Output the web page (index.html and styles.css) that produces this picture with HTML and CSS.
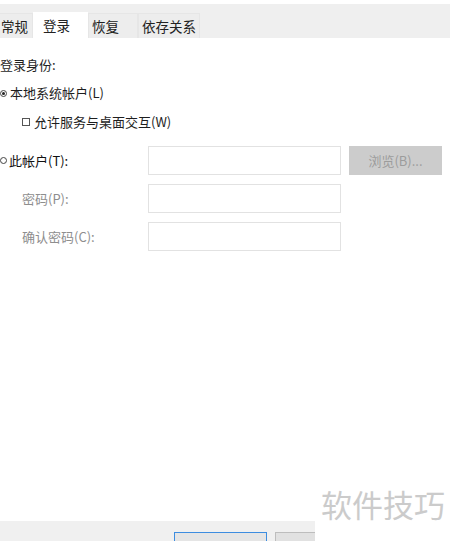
FILE: index.html
```html
<!DOCTYPE html>
<html lang="zh-CN">
<head>
    <meta charset="UTF-8">
    <title>登录</title>
    <link rel="stylesheet" href="styles.css">
</head>
<body>
    <div class="page">
        <!-- Abas -->
        <div class="tabbar">
            <div class="tab tab-general">常规</div>
            <div class="tab tab-active">登录</div>
            <div class="tab tab-recover">恢复</div>
            <div class="tab tab-deps">依存关系</div>
        </div>

        <div class="content">
            <div class="section-label">登录身份:</div>

            <div class="option">
                <span class="radio checked"></span>
                <span>本地系统帐户(L)</span>
            </div>

            <div class="option option-sub">
                <span class="checkbox"></span>
                <span>允许服务与桌面交互(W)</span>
            </div>

            <div class="account-grid">
                <div class="option option-account">
                    <span class="radio"></span>
                    <span>此帐户(T):</span>
                </div>
                <div class="field"></div>
                <div class="btn-browse">浏览(B)...</div>

                <div class="label-disabled">密码(P):</div>
                <div class="field"></div>
                <div></div>

                <div class="label-disabled">确认密码(C):</div>
                <div class="field"></div>
                <div></div>
            </div>
        </div>

        <div class="footer">
            <div class="btn btn-ok"></div>
            <div class="btn"></div>
        </div>
    </div>

    <div class="watermark">软件技巧</div>
</body>
</html>
```

FILE: styles.css
```css
/* Reset */
* {
    margin: 0;
    padding: 0;
    box-sizing: border-box;
}

body {
    font-family: "Noto Sans CJK SC", "Noto Sans", sans-serif;
    font-size: 13px;
    color: #1e1e1e;
    background-color: #ffffff;
    height: 541px;
    overflow: hidden;
    position: relative;
}

.page {
    height: 100%;
    display: flex;
    flex-direction: column;
}

/* Abas */
.tabbar {
    margin-top: 4px;
    height: 34px;
    background-color: #efefef;
    display: flex;
    align-items: flex-end;
    margin-left: -12px;
}

.tab {
    height: 25px;
    line-height: 24px;
    border: 1px solid #e6e6e6;
    border-bottom: none;
    background-color: #ededed;
    color: #222;
    font-size: 13.5px;
}

.tab-general {
    width: 45px;
    text-align: right;
    padding-right: 4px;
}

.tab-active {
    width: 55px;
    height: 26px;
    padding-left: 9px;
    background-color: #ffffff;
    border-color: #ffffff;
}

.tab-recover {
    width: 50px;
    padding-left: 3px;
}

.tab-deps {
    width: 62px;
    text-align: center;
}

/* Conteúdo */
.content {
    flex: 1;
    padding-top: 18px;
}

.section-label {
    line-height: 18px;
}

.option {
    display: flex;
    align-items: center;
    gap: 3px;
    line-height: 18px;
    margin-top: 10px;
}

.option-sub {
    padding-left: 22px;
    margin-top: 11px;
    gap: 4px;
}

.radio {
    width: 7px;
    height: 7px;
    border: 1px solid #444;
    border-radius: 50%;
    position: relative;
}

.radio.checked::after {
    content: "";
    position: absolute;
    left: 1px;
    top: 1px;
    width: 3px;
    height: 3px;
    border-radius: 50%;
    background-color: #222;
}

.checkbox {
    width: 8px;
    height: 8px;
    border: 1px solid #555;
}

.account-grid {
    margin-top: 15px;
    display: grid;
    grid-template-columns: 148px 193px 101px;
    grid-auto-rows: 29px;
    row-gap: 9px;
    align-items: center;
}

.option-account {
    margin-top: 0;
    gap: 2px;
    color: #111;
}

.field {
    height: 29px;
    border: 1px solid #e2e2e2;
    background-color: #ffffff;
}

.btn-browse {
    height: 29px;
    line-height: 29px;
    margin-left: 8px;
    text-align: center;
    background-color: #cccccc;
    color: #9c9c9c;
}

.label-disabled {
    padding-left: 22px;
    color: #8e8e8e;
}

/* Rodapé */
.footer {
    height: 20px;
    background-color: #f0f0f0;
    display: flex;
    align-items: flex-end;
    padding-left: 174px;
    gap: 8px;
}

.btn {
    width: 93px;
    height: 9px;
    background-color: #e1e1e1;
    border: 1px solid #bdbdbd;
    border-bottom: none;
}

.btn-ok {
    border-color: #3d8de0;
    background-color: #e5e5e5;
}

/* Marca d'água */
.watermark {
    position: absolute;
    right: 0;
    bottom: 0;
    width: 135px;
    height: 60px;
    background-color: #ffffff;
    color: #cbcbcb;
    font-size: 31px;
    line-height: 36px;
    padding-left: 6px;
    padding-top: 5px;
}
```
